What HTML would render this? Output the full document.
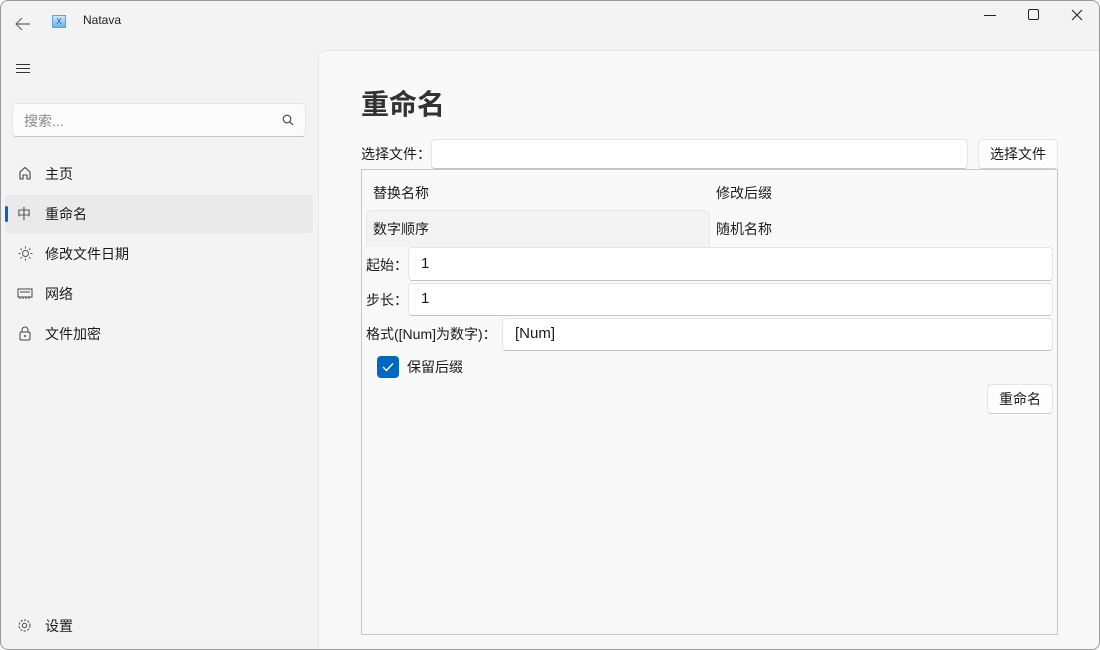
<!DOCTYPE html>
<html><head><meta charset="utf-8"><style>
*{box-sizing:border-box;margin:0;padding:0}
body{width:1100px;height:650px;background:#fff;font-family:"Liberation Sans","Noto Sans CJK SC",sans-serif;color:#1b1b1b;overflow:hidden;position:relative}
.win{position:absolute;left:0;top:0;width:1100px;height:650px;background:#f3f3f3;border-radius:8px;overflow:hidden}
.frame{position:absolute;left:0;top:0;width:1100px;height:650px;border:1px solid #9a9a9a;border-radius:8px;pointer-events:none}
.abs{position:absolute}
.t{font-size:14px;color:#1b1b1b;white-space:nowrap}
.content{position:absolute;left:318px;top:50px;width:790px;height:610px;background:#f9f9f9;border-left:1px solid #e5e5e5;border-top:1px solid #e5e5e5;border-top-left-radius:8px}
.inp{position:absolute;background:#fff;border:1px solid #e5e5e5;border-bottom:1px solid #c4c4c4;border-radius:4px}
.btn{position:absolute;background:#fdfdfd;border:1px solid #e5e5e5;border-bottom:1px solid #d0d0d0;border-radius:4px;font-size:14px;text-align:center}
.nav{position:absolute;left:45px;font-size:14px}
svg{position:absolute}
</style></head><body>
<div class="win">
<svg style="left:14px;top:16px" width="18" height="16" viewBox="0 0 18 16"><path d="M16 8H2M8 2L2 8l6 6" fill="none" stroke="#666" stroke-width="1.2"/></svg>
<div class="abs" style="left:52px;top:15px;width:14px;height:13px;background:linear-gradient(#cde8fb,#6ab3ea);border:1px solid #5fa5da;font-size:8px;color:#1d5fa0;text-align:center;line-height:11px">X</div>
<div class="abs" style="left:83px;top:13px;font-size:12px;color:#222">Natava</div>
<div class="abs" style="left:984px;top:15px;width:12px;height:1px;background:#222"></div>
<div class="abs" style="left:1028px;top:9px;width:11px;height:11px;border:1px solid #222;border-radius:2px"></div>
<svg style="left:1071px;top:9px" width="12" height="12"><path d="M1 1l10 10M11 1L1 11" stroke="#222" stroke-width="1.1"/></svg>

<div class="abs" style="left:16px;top:64px;width:14px;height:1px;background:#333;box-shadow:0 4px 0 #333,0 8px 0 #333"></div>
<div class="inp" style="left:12px;top:103px;width:294px;height:34px;background:#fbfbfb"></div>
<div class="abs" style="left:24px;top:111px;font-size:14px;color:#8a8a8a">搜索...</div>
<svg style="left:282px;top:114px" width="12" height="12"><circle cx="5" cy="5" r="3.8" fill="none" stroke="#444" stroke-width="1.1"/><path d="M8 8l3 3" stroke="#444" stroke-width="1.2"/></svg>

<svg style="left:18px;top:166px" width="14" height="14"><path d="M2 13V6l5-4.5L12 6v7H9V9H5v4z" fill="none" stroke="#444" stroke-width="1.1"/></svg>
<div class="nav" style="top:164px">主页</div>
<div class="abs" style="left:5px;top:195px;width:308px;height:38px;background:#eaeaea;border-radius:4px"></div>
<div class="abs" style="left:5px;top:206px;width:3px;height:16px;background:#0067c0;border-radius:2px"></div>
<div class="abs" style="left:17px;top:204px;font-size:14px;color:#555">中</div>
<div class="nav" style="top:204px">重命名</div>
<svg style="left:18px;top:246px" width="15" height="15"><circle cx="7.5" cy="7.5" r="3" fill="none" stroke="#555"/><path d="M7.5 0.5v2M7.5 12.5v2M0.5 7.5h2M12.5 7.5h2M2.5 2.5l1.4 1.4M11.1 11.1l1.4 1.4M2.5 12.5l1.4-1.4M11.1 3.9l1.4-1.4" stroke="#555"/></svg>
<div class="nav" style="top:244px">修改文件日期</div>
<svg style="left:17px;top:288px" width="16" height="12"><path d="M1 1h14v8H1zM3 9v2M6 9v2M9 9v2M12 9v2M3 4h10" fill="none" stroke="#444"/></svg>
<div class="nav" style="top:284px">网络</div>
<svg style="left:19px;top:326px" width="12" height="15"><rect x="1" y="6" width="10" height="8" rx="1.5" fill="none" stroke="#444"/><path d="M3 6V4a3 3 0 0 1 6 0v2" fill="none" stroke="#444"/><circle cx="6" cy="10" r="1" fill="#444"/></svg>
<div class="nav" style="top:324px">文件加密</div>
<svg style="left:17px;top:618px" width="15" height="15"><circle cx="7.5" cy="7.5" r="2.2" fill="none" stroke="#444"/><circle cx="7.5" cy="7.5" r="5.5" fill="none" stroke="#444" stroke-dasharray="2.2 1.4"/></svg>
<div class="nav" style="top:616px">设置</div>

<div class="content"></div>
<div class="abs" style="left:361px;top:83px;font-size:28px;font-weight:bold;color:#333">重命名</div>
<div class="abs t" style="left:361px;top:144px">选择文件：</div>
<div class="inp" style="left:431px;top:139px;width:537px;height:30px"></div>
<div class="btn" style="left:978px;top:139px;width:80px;height:30px;line-height:28px">选择文件</div>
<div class="abs" style="left:361px;top:169px;width:697px;height:466px;border:1px solid #c8c8c8;background:#f9f9f9"></div>
<div class="abs t" style="left:373px;top:183px">替换名称</div>
<div class="abs t" style="left:716px;top:183px">修改后缀</div>
<div class="abs" style="left:366px;top:210px;width:344px;height:37px;background:#f3f3f3;border:1px solid #e8e8e8;border-bottom:none;border-radius:5px 5px 0 0"></div>
<div class="abs t" style="left:373px;top:219px">数字顺序</div>
<div class="abs t" style="left:716px;top:219px">随机名称</div>
<div class="abs t" style="left:366px;top:255px">起始：</div>
<div class="inp" style="left:408px;top:247px;width:645px;height:34px"></div>
<div class="abs t" style="left:421px;top:255px;font-size:15px">1</div>
<div class="abs t" style="left:366px;top:290px">步长：</div>
<div class="inp" style="left:408px;top:283px;width:645px;height:33px"></div>
<div class="abs t" style="left:421px;top:290px;font-size:15px">1</div>
<div class="abs t" style="left:366px;top:324px">格式([Num]为数字)：</div>
<div class="inp" style="left:502px;top:318px;width:551px;height:33px"></div>
<div class="abs t" style="left:515px;top:325px;font-size:15px">[Num]</div>
<div class="abs" style="left:377px;top:356px;width:22px;height:22px;background:#0067c0;border-radius:4px"></div>
<svg style="left:382px;top:362px" width="12" height="10"><path d="M1 5l3.5 3.5L11 1.5" fill="none" stroke="#fff" stroke-width="1.4"/></svg>
<div class="abs t" style="left:407px;top:357px">保留后缀</div>
<div class="btn" style="left:987px;top:384px;width:66px;height:30px;line-height:28px">重命名</div>
</div>
<div class="frame"></div>
</body></html>
